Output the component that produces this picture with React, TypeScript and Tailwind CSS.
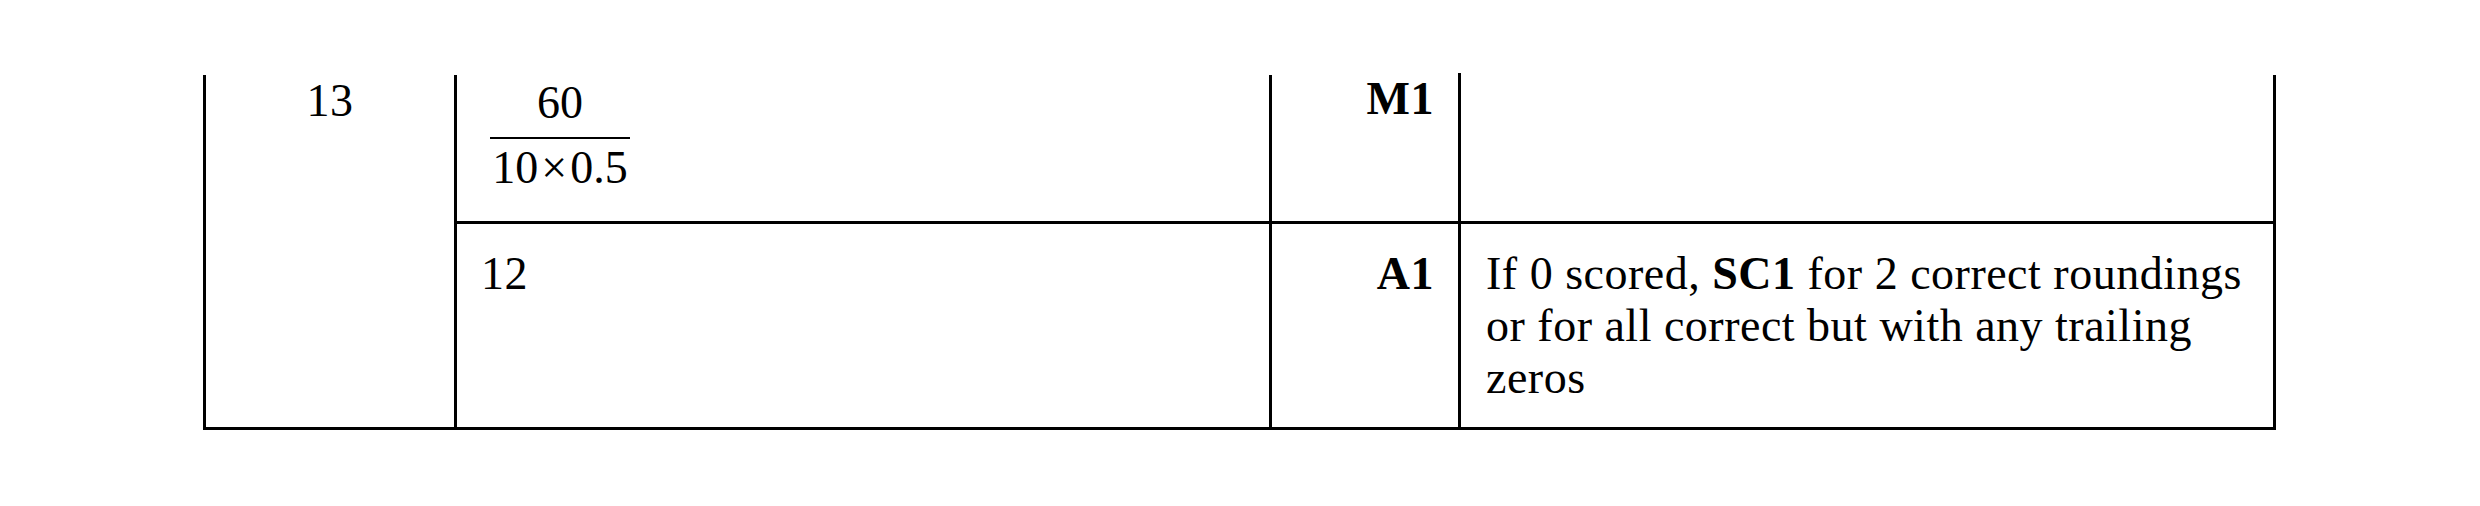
export default function App() {
  return (
    <div className="w-[2480px] h-[506px] bg-white pt-[75px] pl-[203px] font-['Liberation_Serif',serif] text-black text-[46px] leading-[52px] tracking-[0.5px]">
      <div className="w-[2073px] flex border-x-[3px] border-b-[3px] border-black">
        {/* question number */}
        <div className="w-[251px] shrink-0 border-r-[3px] border-black text-center">13</div>

        <div className="flex-1 flex flex-col">
          {/* working */}
          <div className="h-[149px] flex border-b-[3px] border-black">
            <div className="w-[815px] shrink-0 border-r-[3px] border-black pl-[33px] pt-[2px]">
              <div className="inline-flex flex-col items-center text-[46px] leading-[46px] tracking-normal">
                <span className="px-[2px]">60</span>
                <span className="w-[140px] h-[2px] bg-black mt-[11px] mb-[6px]"></span>
                <span className="flex items-center">
                  10<span className="mx-[3px]">×</span>0.5
                </span>
              </div>
            </div>
            <div className="w-[189px] shrink-0 border-r-[3px] border-black text-right pr-[24px] font-bold -mt-[2px]">M1</div>
            <div className="flex-1"></div>
          </div>

          {/* answer */}
          <div className="h-[203px] flex">
            <div className="w-[815px] shrink-0 border-r-[3px] border-black pl-[24px] pt-[24px]">12</div>
            <div className="w-[189px] shrink-0 border-r-[3px] border-black text-right pr-[24px] pt-[24px] font-bold">A1</div>
            <div className="flex-1 pl-[25px] pr-[20px] pt-[24px]">
              If 0 scored, <span className="font-bold">SC1</span> for 2 correct roundings or for all correct but with any trailing zeros
            </div>
          </div>
        </div>
      </div>
    </div>
  );
}
